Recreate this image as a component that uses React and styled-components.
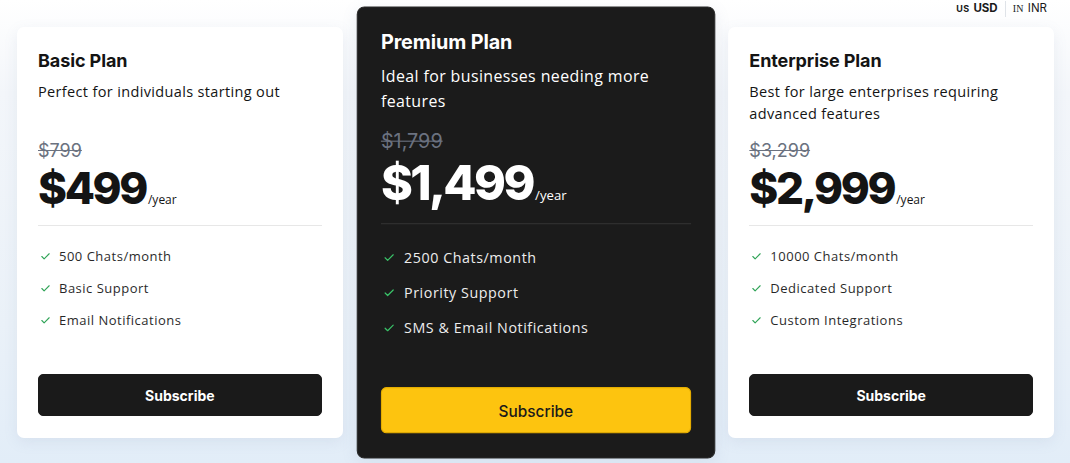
import React from "react"
import styled, { createGlobalStyle } from "styled-components"

const plans = [
  {
    id: "basic",
    title: "Basic Plan",
    desc: "Perfect for individuals starting out",
    oldPrice: "$799",
    price: "$499",
    features: ["500 Chats/month", "Basic Support", "Email Notifications"],
  },
  {
    id: "premium",
    title: "Premium Plan",
    desc: "Ideal for businesses needing more features",
    oldPrice: "$1,799",
    price: "$1,499",
    features: ["2500 Chats/month", "Priority Support", "SMS & Email Notifications"],
    featured: true,
  },
  {
    id: "enterprise",
    title: "Enterprise Plan",
    desc: "Best for large enterprises requiring advanced features",
    oldPrice: "$3,299",
    price: "$2,999",
    features: ["10000 Chats/month", "Dedicated Support", "Custom Integrations"],
  },
]

const GlobalStyle = createGlobalStyle`
  * { box-sizing: border-box; }
  html, body { margin: 0; padding: 0; }
  body {
    font-family: "Open Sans", "Noto Sans", sans-serif;
    -webkit-font-smoothing: antialiased;
  }
`

const CheckIcon = ({ color }) => (
  <svg width="11" height="11" viewBox="0 0 24 24" fill="none" stroke={color} strokeWidth="2.4" strokeLinecap="round" strokeLinejoin="round">
    <path d="M20 6 9 17l-5-5" />
  </svg>
)

const App = () => {
  return (
    <>
      <GlobalStyle />
      <Page>
        <TopBar>
          <Currency $active>
            <span className="flag">US</span>
            <span>USD</span>
          </Currency>
          <Divider />
          <Currency>
            <span className="flag serif">IN</span>
            <span>INR</span>
          </Currency>
        </TopBar>
        <Cards>
          {plans.map((p) => (
            <Card key={p.id} $featured={p.featured}>
              <Title $featured={p.featured}>{p.title}</Title>
              <Desc>{p.desc}</Desc>
              <OldPrice>{p.oldPrice}</OldPrice>
              <PriceRow>
                <Price>{p.price}</Price>
                <Per>/year</Per>
              </PriceRow>
              <Rule />
              <Features>
                {p.features.map((f) => (
                  <Feature key={f}>
                    <CheckIcon color={p.featured ? "#3ccf6e" : "#1f9d4a"} />
                    <span>{f}</span>
                  </Feature>
                ))}
              </Features>
              <Button $featured={p.featured}>Subscribe</Button>
            </Card>
          ))}
        </Cards>
      </Page>
    </>
  )
}

const Page = styled.div`
  width: 1070px;
  height: 463px;
  overflow: hidden;
  background: linear-gradient(180deg, #ffffff 0%, #f3f6fa 20%, #eaf1f8 70%, #e2edf8 100%);
  display: flex;
  flex-direction: column;
`

const TopBar = styled.div`
  height: 27px;
  display: flex;
  justify-content: flex-end;
  align-items: flex-start;
  padding: 0 23px 0 0;
  gap: 7px;
`

const Currency = styled.div`
  display: flex;
  align-items: baseline;
  gap: 4px;
  height: 17px;
  line-height: 17px;
  font-family: "Inter", sans-serif;
  font-size: 11.5px;
  color: #1a1a1a;
  font-weight: ${(p) => (p.$active ? 700 : 400)};
  span.flag {
    font-size: 9px;
    font-weight: 700;
    letter-spacing: 0.3px;
  }
  span.serif {
    font-family: "Liberation Serif", serif;
    font-size: 10px;
    font-weight: 400;
  }
`

const Divider = styled.div`
  width: 1px;
  height: 16px;
  background: #dfe3e8;
  margin-top: 1px;
`

const Cards = styled.div`
  display: grid;
  grid-template-columns: repeat(3, 1fr);
  gap: 30px;
  padding: 0 16px 0 17px;
`

const Card = styled.div`
  height: 411px;
  display: flex;
  flex-direction: column;
  padding: 22px 21px 22px 21px;
  border-radius: 7px;
  background: ${(p) => (p.$featured ? "#1b1b1b" : "#ffffff")};
  color: ${(p) => (p.$featured ? "#ffffff" : "#141414")};
  box-shadow: 0 4px 14px rgba(120, 140, 170, 0.12);
  transform: ${(p) => (p.$featured ? "scale(1.1)" : "none")};
  border: ${(p) => (p.$featured ? "1px solid #2a2a2a" : "none")};
  position: relative;
  z-index: ${(p) => (p.$featured ? 2 : 1)};
`

const Title = styled.h3`
  margin: ${(p) => (p.$featured ? "-2px" : "0")} 0 0;
  font-family: "Inter", sans-serif;
  font-size: 18px;
  font-weight: 700;
  line-height: 24px;
  letter-spacing: -0.1px;
`

const Desc = styled.p`
  margin: 8px 0 0;
  height: 42px;
  font-size: 14.5px;
  line-height: 21.5px;
  font-weight: 400;
  letter-spacing: 0.35px;
`

const OldPrice = styled.div`
  margin-top: 17px;
  font-family: "Inter", sans-serif;
  font-size: 18px;
  line-height: 22px;
  color: #6b7280;
  text-decoration: line-through;
  letter-spacing: 0;
`

const PriceRow = styled.div`
  display: flex;
  align-items: baseline;
  height: 52px;
`

const Price = styled.span`
  font-family: "Inter", sans-serif;
  font-size: 44px;
  font-weight: 800;
  line-height: 52px;
  letter-spacing: -2.4px;
`

const Per = styled.span`
  font-size: 12px;
  margin-left: 2px;
`

const Rule = styled.div`
  margin-top: 11px;
  height: 1px;
  background: currentColor;
  opacity: 0.1;
`

const Features = styled.ul`
  list-style: none;
  margin: 20px 0 0;
  padding: 0 0 0 2px;
  flex: 1;
  display: flex;
  flex-direction: column;
  gap: 12px;
`

const Feature = styled.li`
  display: flex;
  align-items: center;
  gap: 8px;
  font-size: 13px;
  line-height: 20px;
  letter-spacing: 0.5px;
  opacity: 0.92;
  svg {
    flex-shrink: 0;
  }
`

const Button = styled.button`
  height: 42px;
  width: 100%;
  border-radius: 5px;
  font-family: "Inter", sans-serif;
  font-size: 14px;
  font-weight: ${(p) => (p.$featured ? 500 : 700)};
  cursor: pointer;
  background: ${(p) => (p.$featured ? "#fdc40f" : "#1a1a1a")};
  color: ${(p) => (p.$featured ? "#1a1a1a" : "#ffffff")};
  border: 1px solid ${(p) => (p.$featured ? "#e5ad00" : "#1a1a1a")};
`

export default App
